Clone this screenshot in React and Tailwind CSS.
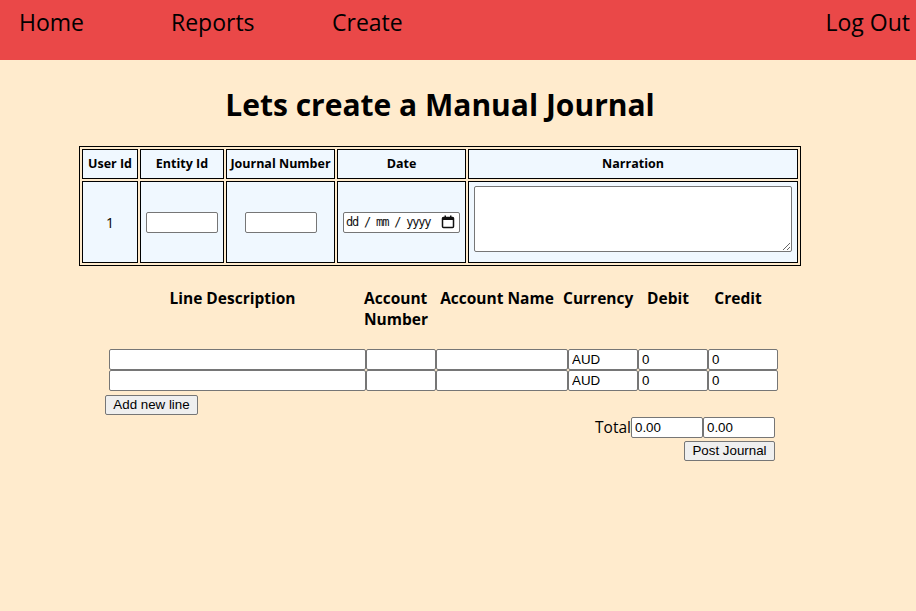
import React, { useState } from 'react';

const inputCls =
  "h-[21px] bg-white border border-[#767676] rounded-[2px] px-[3px] font-['Liberation_Sans',Arial,sans-serif] text-[13.33px] leading-none text-black outline-none";

const btnCls =
  "bg-[#efefef] border border-[#767676] rounded-[2px] px-[6px] h-[20px] font-['Liberation_Sans',Arial,sans-serif] text-[13.33px] leading-none text-black whitespace-nowrap";

const Nav = () => (
  <nav className="h-[60px] bg-[#ea4848] flex items-start pt-[5px] text-[23px] leading-[34px] text-black">
    <a className="ml-[19px] w-[152px]">Home</a>
    <a className="w-[161px]">Reports</a>
    <a>Create</a>
    <a className="ml-auto mr-[6px]">Log Out</a>
  </nav>
);

const CalendarIcon = () => (
  <svg width="14" height="14" viewBox="0 0 14 14" className="shrink-0">
    <rect x="1.5" y="2.5" width="11" height="10" rx="1" fill="none" stroke="#111" strokeWidth="1.5" />
    <rect x="1.5" y="2.5" width="11" height="2.5" fill="#111" />
    <rect x="3.5" y="0.5" width="1.5" height="2.5" fill="#111" />
    <rect x="9" y="0.5" width="1.5" height="2.5" fill="#111" />
  </svg>
);

const HeaderTable = () => (
  <table className="mx-auto w-[721px] table-fixed border border-black border-separate border-spacing-[2px] text-[12.5px]">
    <colgroup>
      <col className="w-[56px]" />
      <col className="w-[84px]" />
      <col className="w-[109px]" />
      <col className="w-[129px]" />
      <col className="w-[330px]" />
    </colgroup>
    <thead>
      <tr className="h-[30px]">
        {['User Id', 'Entity Id', 'Journal Number', 'Date', 'Narration'].map(h => (
          <th key={h} className="border border-black bg-[#f0f8ff] font-bold p-0 whitespace-nowrap">{h}</th>
        ))}
      </tr>
    </thead>
    <tbody>
      <tr className="h-[82px]">
        <td className="border border-black bg-[#f0f8ff] text-center text-[14px]">1</td>
        <td className="border border-black bg-[#f0f8ff] text-center">
          <input className={`${inputCls} w-[72px]`} />
        </td>
        <td className="border border-black bg-[#f0f8ff] text-center">
          <input className={`${inputCls} w-[72px]`} />
        </td>
        <td className="border border-black bg-[#f0f8ff]">
          <div className="mx-auto w-[117px] h-[21px] bg-white border border-[#767676] rounded-[2px] flex items-center pl-[2px] pr-[4px] font-['DejaVu_Sans_Mono',monospace] text-[12px] text-[#111]">
            <span className="flex-1 tracking-[-1.2px] whitespace-nowrap">dd / mm / yyyy</span>
            <CalendarIcon />
          </div>
        </td>
        <td className="border border-black bg-[#f0f8ff] px-[5px] align-top pt-[4px]">
          <textarea className="block w-full h-[66px] bg-white border border-[#767676] rounded-[2px] resize-y outline-none" />
        </td>
      </tr>
    </tbody>
  </table>
);

const cols = 'grid grid-cols-[257px_70px_132px_70px_70px_70px]';

const Lines = () => {
  const [lines, setLines] = useState([0, 1]);
  return (
    <div className="w-[680px] ml-[105px] mt-[22px]">
      <div className={`${cols} ml-[-1px] text-[15.5px] font-bold leading-[21px] text-center`}>
        <div>Line Description</div>
        <div className="text-left pl-[3px]">Account Number</div>
        <div className="whitespace-nowrap">Account Name</div>
        <div>Currency</div>
        <div>Debit</div>
        <div>Credit</div>
      </div>
      <div className="mt-[19px] ml-[4px]">
        {lines.map(i => (
          <div key={i} className={cols}>
            <input className={inputCls} />
            <input className={inputCls} />
            <input className={inputCls} />
            <input className={inputCls} defaultValue="AUD" />
            <input className={inputCls} defaultValue="0" />
            <input className={inputCls} defaultValue="0" />
          </div>
        ))}
      </div>
      <button className={`${btnCls} mt-[3px] w-[93px]`} onClick={() => setLines([...lines, lines.length])}>
        Add new line
      </button>
      <div className="w-[670px] flex flex-col items-end mt-[2px]">
        <div className="flex items-center">
          <span className="text-[15.5px] leading-[21px]">Total</span>
          <input className={`${inputCls} w-[72px]`} defaultValue="0.00" />
          <input className={`${inputCls} w-[72px]`} defaultValue="0.00" />
        </div>
        <button className={`${btnCls} mt-[3px] w-[91px]`}>Post Journal</button>
      </div>
    </div>
  );
};

export default function App() {
  return (
    <div className="min-h-screen bg-[#ffebcd] font-['Open_Sans',sans-serif] text-black">
      <Nav />
      <div className="w-[880px]">
        <h1 className="text-center text-[30px] font-bold leading-[40px] mt-[25px] mb-[21px]">Lets create a Manual Journal</h1>
        <HeaderTable />
        <Lines />
      </div>
    </div>
  );
}
